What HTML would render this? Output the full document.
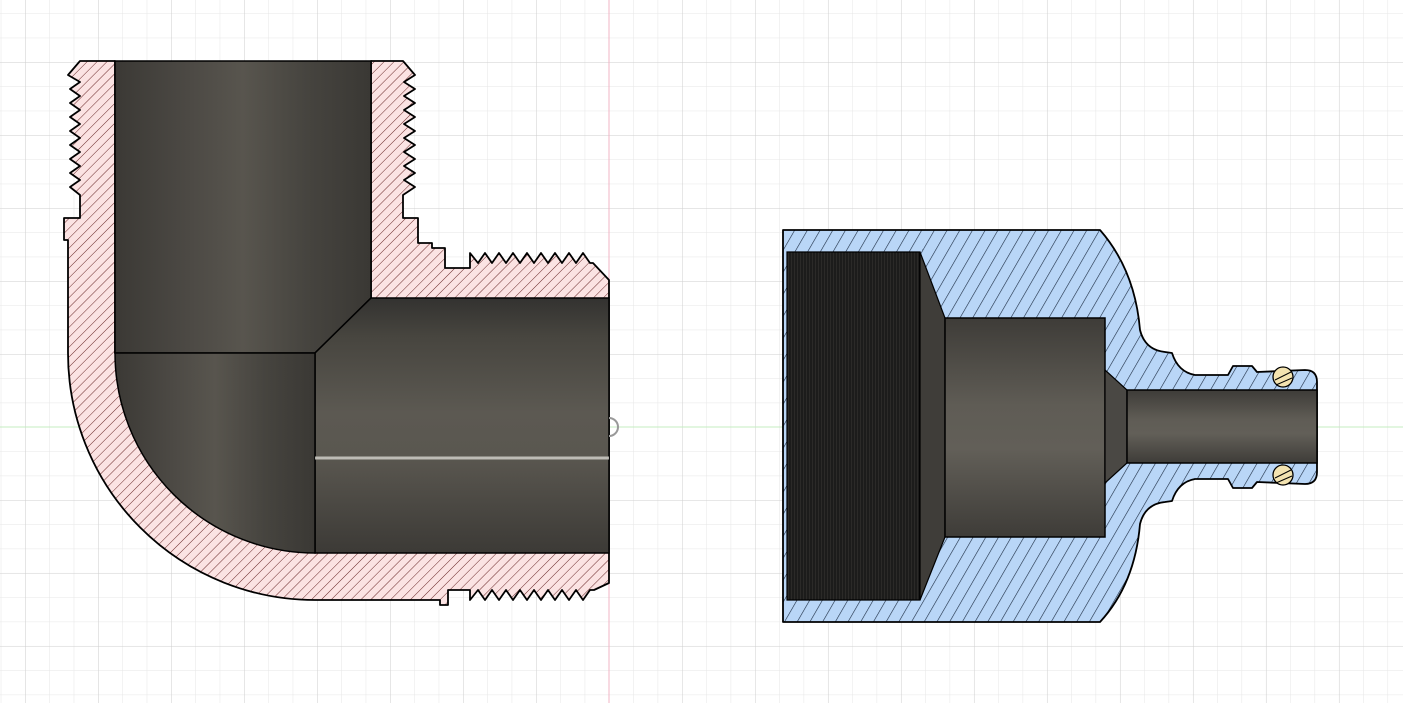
<!DOCTYPE html>
<html><head><meta charset="utf-8"><style>html,body{margin:0;padding:0;background:#fff;overflow:hidden}svg{display:block}</style></head><body>
<svg width="1403" height="703" viewBox="0 0 1403 703" xmlns="http://www.w3.org/2000/svg">
<defs>
<pattern id="gmin" x="682" y="427" width="24.33" height="24.33" patternUnits="userSpaceOnUse"><path d="M0 0V24.33M0 0H24.33" stroke="#e6e6e6" stroke-width="1" fill="none"/></pattern>
<pattern id="gmaj" x="682" y="427" width="73" height="73" patternUnits="userSpaceOnUse"><path d="M0 0V73M0 0H73" stroke="#cfcfcf" stroke-width="1" fill="none"/></pattern>
<pattern id="hp" width="7" height="7" patternUnits="userSpaceOnUse" patternTransform="rotate(45)"><rect width="7" height="7" fill="#fbe3e3"/><path d="M0 0V7" stroke="#6b2a2a" stroke-width="1"/></pattern>
<pattern id="hb" width="11" height="11" patternUnits="userSpaceOnUse" patternTransform="rotate(30)"><rect width="11" height="11" fill="#b9d6f7"/><path d="M0 0V11" stroke="#1a2a40" stroke-width="1.2"/></pattern>
<linearGradient id="gv" x1="0" x2="1" y1="0" y2="0"><stop offset="0" stop-color="#3b3935"/><stop offset=".3" stop-color="#4d4a45"/><stop offset=".5" stop-color="#58554e"/><stop offset=".75" stop-color="#46443f"/><stop offset="1" stop-color="#3a3834"/></linearGradient>
<linearGradient id="gh" x1="0" x2="0" y1="0" y2="1"><stop offset="0" stop-color="#333230"/><stop offset=".15" stop-color="#47453f"/><stop offset=".45" stop-color="#5c5952"/><stop offset=".62" stop-color="#5a5750"/><stop offset="1" stop-color="#3c3a36"/></linearGradient>
<linearGradient id="gb" x1="0" x2="0" y1="0" y2="1"><stop offset="0" stop-color="#3e3c38"/><stop offset=".4" stop-color="#5f5c55"/><stop offset=".6" stop-color="#625f58"/><stop offset="1" stop-color="#3e3c38"/></linearGradient>
<pattern id="thr" width="3" height="10" patternUnits="userSpaceOnUse"><rect width="3" height="10" fill="#2b2a28"/><path d="M1 0V10" stroke="#0e0e0e" stroke-width="1"/></pattern>
</defs>
<rect width="1403" height="703" fill="#fff"/>
<rect width="1403" height="703" fill="url(#gmin)"/>
<rect width="1403" height="703" fill="url(#gmaj)"/>
<line x1="609" y1="0" x2="609" y2="703" stroke="#f0b4c4" stroke-width="1"/>
<line x1="0" y1="427" x2="1403" y2="427" stroke="#c4ecc0" stroke-width="1"/>

<path fill="url(#hp)" stroke="#000" stroke-width="1.8" stroke-linejoin="round" d="M80 61 L115 61 L115 353 L371 353 L371 61 L403 61 L415 75 L404 82 L415 89 L404 96 L415 103 L404 110 L415 117 L404 124 L415 131 L404 138 L415 145 L404 152 L415 159 L404 166 L415 173 L404 180 L415 187 L403 195 L403 218 L418 218 L418 243 L432 243 L432 248 L445 248 L445 268 L470 268 L470 253 L478 263 L485 253 L492 263 L499 253 L506 263 L513 253 L520 263 L527 253 L534 263 L541 253 L548 263 L555 253 L562 263 L569 253 L576 263 L583 253 L590 263 L593 263 L609 280 L609 298 L609 583 L594 590 L590 590 L583 600 L576 590 L569 600 L562 590 L555 600 L548 590 L541 600 L534 590 L527 600 L520 590 L513 600 L506 590 L499 600 L492 590 L485 600 L478 590 L470 600 L470 590 L448 590 L448 605 L440 605 L440 600 L315 600 A247 247 0 0 1 68 353 L68 240 L64 240 L64 218 L80 218 L80 195 L70 187 L80 180 L70 173 L80 166 L70 159 L80 152 L70 145 L80 138 L70 131 L80 124 L70 117 L80 110 L70 103 L80 96 L70 89 L80 82 L68 75 Z"/>
<path fill="url(#gv)" stroke="#000" stroke-width="1.5" d="M115 61 L371 61 L371 298 L315 353 L115 353 Z"/>
<path fill="url(#gh)" stroke="#000" stroke-width="1.5" d="M371 298 L609 298 L609 553 L315 553 L315 353 Z"/>
<path fill="url(#gv)" stroke="#000" stroke-width="1.5" d="M115 353 L315 353 L315 553 A200 200 0 0 1 115 353 Z"/>
<line x1="315" y1="458" x2="609" y2="458" stroke="#d8d6d0" stroke-width="3" opacity=".8"/>
<path d="M609 418 A8 8 0 0 1 609 436" stroke="#999" stroke-width="2" fill="none"/>

<path fill="url(#hb)" stroke="#000" stroke-width="1.8" stroke-linejoin="round" d="M783 230 L1100 230 Q1135 270 1140 330 Q1145 350 1165 352 L1172 353 Q1178 372 1195 375 L1228 375 L1233 366 L1252 366 L1257 372 L1305 370 Q1317 370 1317 382 L1317 472 Q1317 484 1305 484 L1257 482 L1252 488 L1233 488 L1228 479 L1195 479 Q1178 482 1172 501 L1165 502 Q1145 504 1140 524 Q1135 584 1100 622 L783 622 Z"/>
<path fill="url(#thr)" stroke="#000" stroke-width="1.2" d="M787 252 L920 252 L920 600 L787 600 Z"/>
<path fill="#3f3d39" stroke="#000" stroke-width="1.2" d="M920 252 L945 318 L945 537 L920 600 Z"/>
<path fill="url(#gb)" stroke="#000" stroke-width="1.5" d="M945 318 L1105 318 L1105 537 L945 537 Z"/>
<path fill="#4a4844" stroke="#000" stroke-width="1.2" d="M1105 370 L1127 390 L1127 463 L1105 483 Z"/>
<path fill="url(#gb)" stroke="#000" stroke-width="1.5" d="M1127 390 L1317 390 L1317 463 L1127 463 Z"/>
<g stroke="#000" stroke-width="1.3" fill="#f3e3b0"><circle cx="1283" cy="377" r="10"/><circle cx="1283" cy="475" r="10"/></g>
<g stroke="#000" stroke-width="1"><line x1="1275" y1="380" x2="1291" y2="372"/><line x1="1276" y1="385" x2="1292" y2="378"/><line x1="1275" y1="478" x2="1291" y2="470"/><line x1="1276" y1="483" x2="1292" y2="476"/></g>
</svg>
</body></html>
